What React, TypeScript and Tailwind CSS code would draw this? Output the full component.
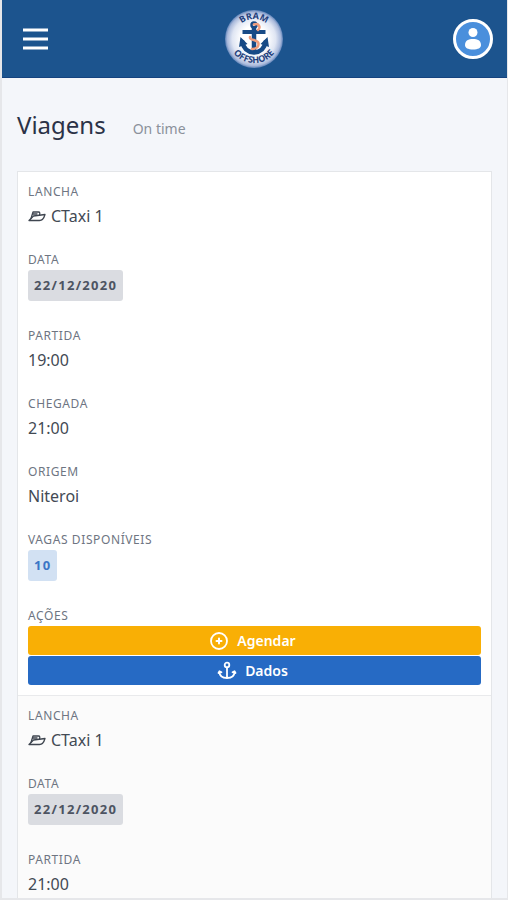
import * as React from 'react';

interface Trip {
  id: number;
  boat: string;
  date: string;
  departure: string;
  arrival?: string;
  origin?: string;
  seats?: number;
}

const trips: Trip[] = [
  { id: 1, boat: 'CTaxi 1', date: '22/12/2020', departure: '19:00', arrival: '21:00', origin: 'Niteroi', seats: 10 },
  { id: 2, boat: 'CTaxi 1', date: '22/12/2020', departure: '21:00' },
];

const Logo = () => (
  <svg viewBox="0 0 60 60" className="size-[60px]" role="img" aria-label="Bram Offshore">
    <defs>
      <radialGradient id="badge">
        <stop offset="0.45" stopColor="#ffffff" />
        <stop offset="0.75" stopColor="#dfe5f3" />
        <stop offset="0.92" stopColor="#a9b9db" />
        <stop offset="1" stopColor="#5f83b8" />
      </radialGradient>
      <path id="arcTop" d="M11 29a19 19 0 0 1 38 0" />
      <path id="arcBottom" d="M4 28a26 26 0 0 0 52 0" />
    </defs>
    <circle cx="30" cy="30" r="29" fill="url(#badge)" />
    <g fill="none" stroke="#174a86" strokeLinecap="round">
      <circle cx="30" cy="16" r="2.500" strokeWidth="2.500" />
      <path d="M30 19v23" strokeWidth="4.500" />
      <path d="M18.500 23h23" strokeWidth="4" strokeLinecap="butt" />
      <path d="M18.500 33c1 7 5 10 11.500 10.500c6.500-.5 10.500-3.500 11.500-10.500" strokeWidth="4.500" />
    </g>
    <path d="M15 38l1.500-10 7 7zM45 38l-1.500-10-7 7z" fill="#174a86" />
    <path
      d="M30 15.500c5-2 7 3 4 5.500M26 28c-1 4 9 2 8.500 7c0 4-4 5-6.500 5"
      fill="none"
      stroke="#ee9c7c"
      strokeWidth="2.500"
      strokeLinecap="round"
    />
    <g fill="#1f3f7c" fontWeight="bold" fontSize="9" textAnchor="middle">
      <text>
        <textPath href="#arcTop" startOffset="50%">BRAM</textPath>
      </text>
      <text>
        <textPath href="#arcBottom" startOffset="50%">OFFSHORE</textPath>
      </text>
    </g>
  </svg>
);

const Avatar = () => (
  <svg viewBox="0 0 40 40" className="size-10" aria-hidden="true">
    <circle cx="20" cy="20" r="18.500" fill="#4a8fdc" stroke="#ffffff" strokeWidth="3" />
    <circle cx="20" cy="13.500" r="4.500" fill="#ffffff" />
    <path d="M12 26c0-4.500 3.500-6 8-6s8 1.500 8 6c0 3-3 4.500-8 4.500s-8-1.500-8-4.500z" fill="#ffffff" />
  </svg>
);

const BoatIcon = () => (
  <svg
    viewBox="0 0 18 12"
    className="h-3 w-[18px]"
    fill="none"
    stroke="#3f4650"
    strokeWidth="1.300"
    strokeLinejoin="round"
    strokeLinecap="round"
    aria-hidden="true"
  >
    <path d="M1 10.500L5.500 6L17 4.500C16 8 14 10.500 11.500 10.500z" />
    <path d="M3 8.500L5 2h5.500c1.500 0 1.500 1.500 1 3M5 4h4" />
  </svg>
);

const ScheduleIcon = () => (
  <svg viewBox="0 0 20 20" className="size-5" fill="none" stroke="currentColor" strokeLinecap="round" aria-hidden="true">
    <circle cx="10" cy="10" r="8" strokeWidth="1.800" />
    <path d="M7.500 10h5M10 7.500v5" strokeWidth="2" />
  </svg>
);

const AnchorIcon = () => (
  <svg
    viewBox="0 0 20 20"
    className="size-5"
    fill="none"
    stroke="currentColor"
    strokeWidth="1.800"
    strokeLinecap="round"
    strokeLinejoin="round"
    aria-hidden="true"
  >
    <circle cx="10" cy="4" r="2.300" />
    <path d="M10 6.500v10.500M2.500 10.500c0 4.500 3 6.500 7.500 6.500s7.500-2 7.500-6.500M1.500 12l1-1.800 2 1M18.500 12l-1-1.800-2 1" />
  </svg>
);

const Cell = ({ label, children }: { label: string; children: React.ReactNode }) => (
  <td className="block px-[10px] pt-[11px]">
    <span className="block text-[12px] leading-[18px] tracking-wider uppercase text-[#6e7582]">{label}</span>
    {children}
  </td>
);

const Value = ({ children }: { children: React.ReactNode }) => (
  <div className="flex items-center gap-[5px] pb-[9px] text-base leading-[30px] text-[#434a54]">{children}</div>
);

export default function App() {
  return (
    <div className="flex h-screen flex-col overflow-hidden border-b-2 border-l-2 border-r border-[#e6e7ea] bg-[#f4f6fa] font-['Noto_Sans','Open_Sans',sans-serif]">
      <header className="flex h-[78px] shrink-0 items-center justify-between border-b border-[#15437f] bg-[#1c548e] pl-[21px] pr-[14px]">
        <button type="button" aria-label="Menu" className="flex w-8 text-white">
          <svg viewBox="0 0 25 22" className="h-[22px] w-[25px]" stroke="currentColor" strokeWidth="3" aria-hidden="true">
            <path d="M0 2h25M0 11h25M0 20h25" />
          </svg>
        </button>
        <Logo />
        <button type="button" aria-label="Perfil">
          <Avatar />
        </button>
      </header>

      <main className="px-[15px]">
        <div className="flex h-[93px] items-baseline gap-[27px] pt-[31px]">
          <h1 className="text-2xl leading-8 text-[#2b3247]">Viagens</h1>
          <span className="text-sm text-[#8b919b]">On time</span>
        </div>

        <table className="block border border-[#e4e6e9] bg-white" aria-label="Viagens">
          <tbody className="block">
            {trips.map((trip) => (
              <tr key={trip.id} className="block border-b border-[#e9eaec] pb-[10px] even:bg-[#fbfbfb]">
                <Cell label="Lancha">
                  <Value>
                    <BoatIcon />
                    {trip.boat}
                  </Value>
                </Cell>
                <Cell label="Data">
                  <div className="pt-px pb-[15px]">
                    <span className="flex h-[31px] w-fit items-center rounded-[3px] bg-[#dadce1] px-[6px] text-[13px] font-bold tracking-widest text-[#4d5462]">
                      {trip.date}
                    </span>
                  </div>
                </Cell>
                <Cell label="Partida">
                  <Value>{trip.departure}</Value>
                </Cell>
                {trip.arrival && (
                  <Cell label="Chegada">
                    <Value>{trip.arrival}</Value>
                  </Cell>
                )}
                {trip.origin && (
                  <Cell label="Origem">
                    <Value>{trip.origin}</Value>
                  </Cell>
                )}
                {trip.seats && (
                  <>
                    <Cell label="Vagas disponíveis">
                      <div className="pt-px pb-[15px]">
                        <span className="flex h-[31px] w-fit items-center rounded-[3px] bg-[#d2e1f3] px-[6px] text-[13px] font-bold tracking-widest text-[#3b76c6]">
                          {trip.seats}
                        </span>
                      </div>
                    </Cell>
                    <Cell label="Ações">
                      <div className="flex flex-col gap-px pt-px text-sm font-semibold text-white">
                        <button type="button" className="flex h-[29px] items-center justify-center gap-2 rounded-[3px] bg-[#f9af05] pr-1">
                          <ScheduleIcon />
                          Agendar
                        </button>
                        <button type="button" className="flex h-[29px] items-center justify-center gap-2 rounded-[3px] bg-[#266ac4] pr-1">
                          <AnchorIcon />
                          Dados
                        </button>
                      </div>
                    </Cell>
                  </>
                )}
              </tr>
            ))}
          </tbody>
        </table>
      </main>
    </div>
  );
}
